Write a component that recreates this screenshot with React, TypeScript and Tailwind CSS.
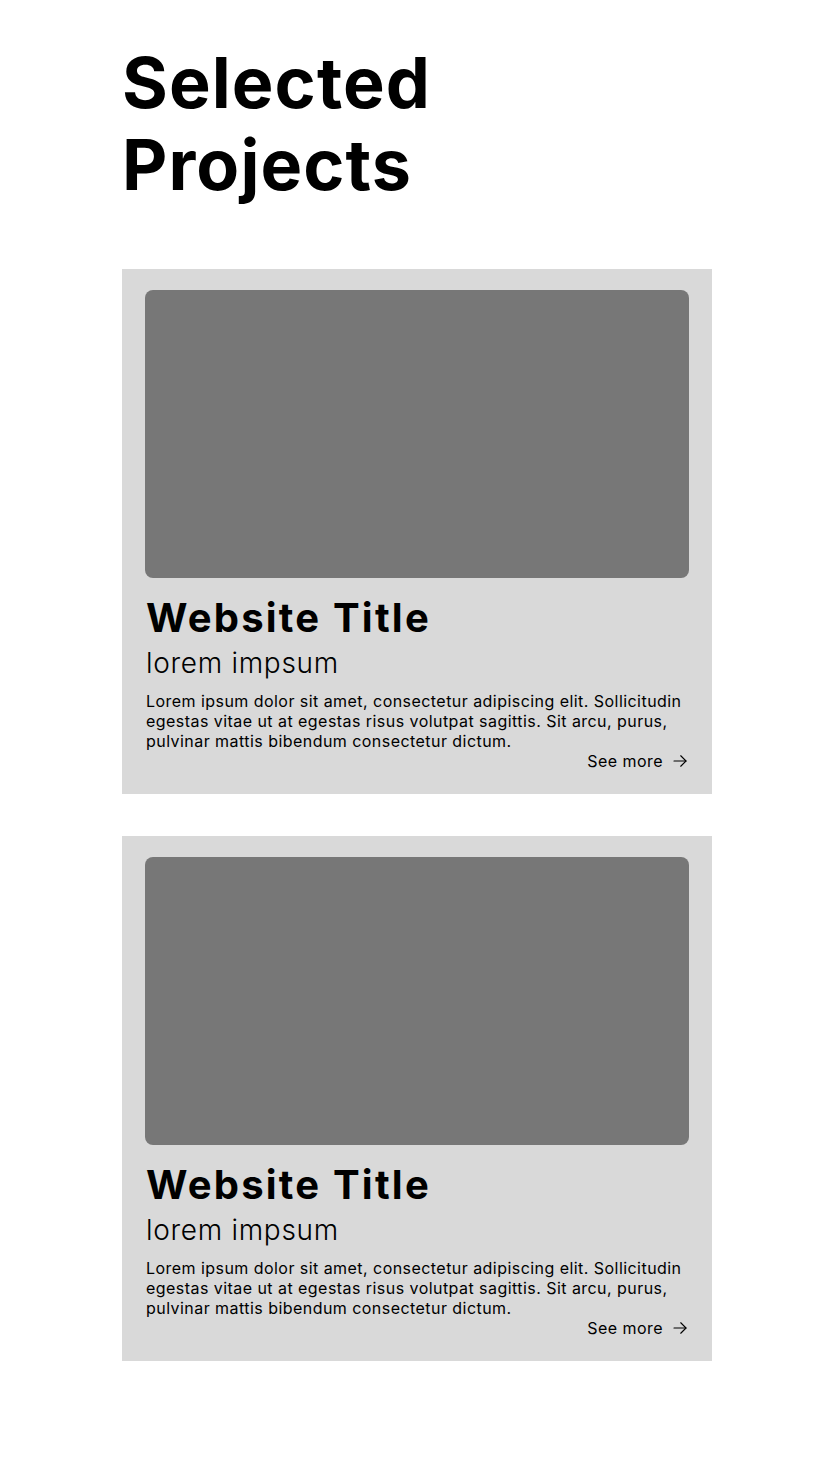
import React from "react";

const font = { fontFamily: "Inter, 'Noto Sans', sans-serif" } as const;

function Arrow() {
  return (
    <svg width="18" height="18" viewBox="0 0 24 24" fill="none" stroke="currentColor" strokeWidth="1.5" strokeLinecap="round" strokeLinejoin="round">
      <path d="M4 12h16" />
      <path d="M13 5l7 7-7 7" />
    </svg>
  );
}

function Card() {
  return (
    <div className="bg-[#d9d9d9] px-[23px] pt-[21px] pb-[23px]">
      <div className="h-[288px] rounded-[8px] bg-[#777777]" />
      <h2 className="mt-[16px] text-[40px] leading-[48px] font-bold tracking-[2.2px] text-black pl-[1px]">Website Title</h2>
      <p className="mt-[4px] text-[28px] leading-[34px] font-light tracking-[0.7px] text-black pl-[1px]">lorem impsum</p>
      <p className="mt-[11px] text-[16px] leading-[20px] tracking-[0.45px] text-black pl-[1px]">
        Lorem ipsum dolor sit amet, consectetur adipiscing elit. Sollicitudin egestas vitae ut at egestas risus volutpat sagittis. Sit arcu, purus, pulvinar mattis bibendum consectetur dictum.
      </p>
      <div className="flex justify-end items-center gap-[8px] text-[16px] leading-[20px] tracking-[0.45px] text-black">
        <span>See more</span>
        <Arrow />
      </div>
    </div>
  );
}

export default function App() {
  return (
    <div className="min-h-[1468px] bg-white" style={font}>
      <div className="mx-auto w-[590px] pt-[42px]">
        <h1 className="text-[70px] leading-[82px] font-bold tracking-[1.1px] text-black">
          Selected
          <br />
          Projects
        </h1>
        <div className="mt-[63px] flex flex-col gap-[42px]">
          <Card />
          <Card />
        </div>
      </div>
    </div>
  );
}
